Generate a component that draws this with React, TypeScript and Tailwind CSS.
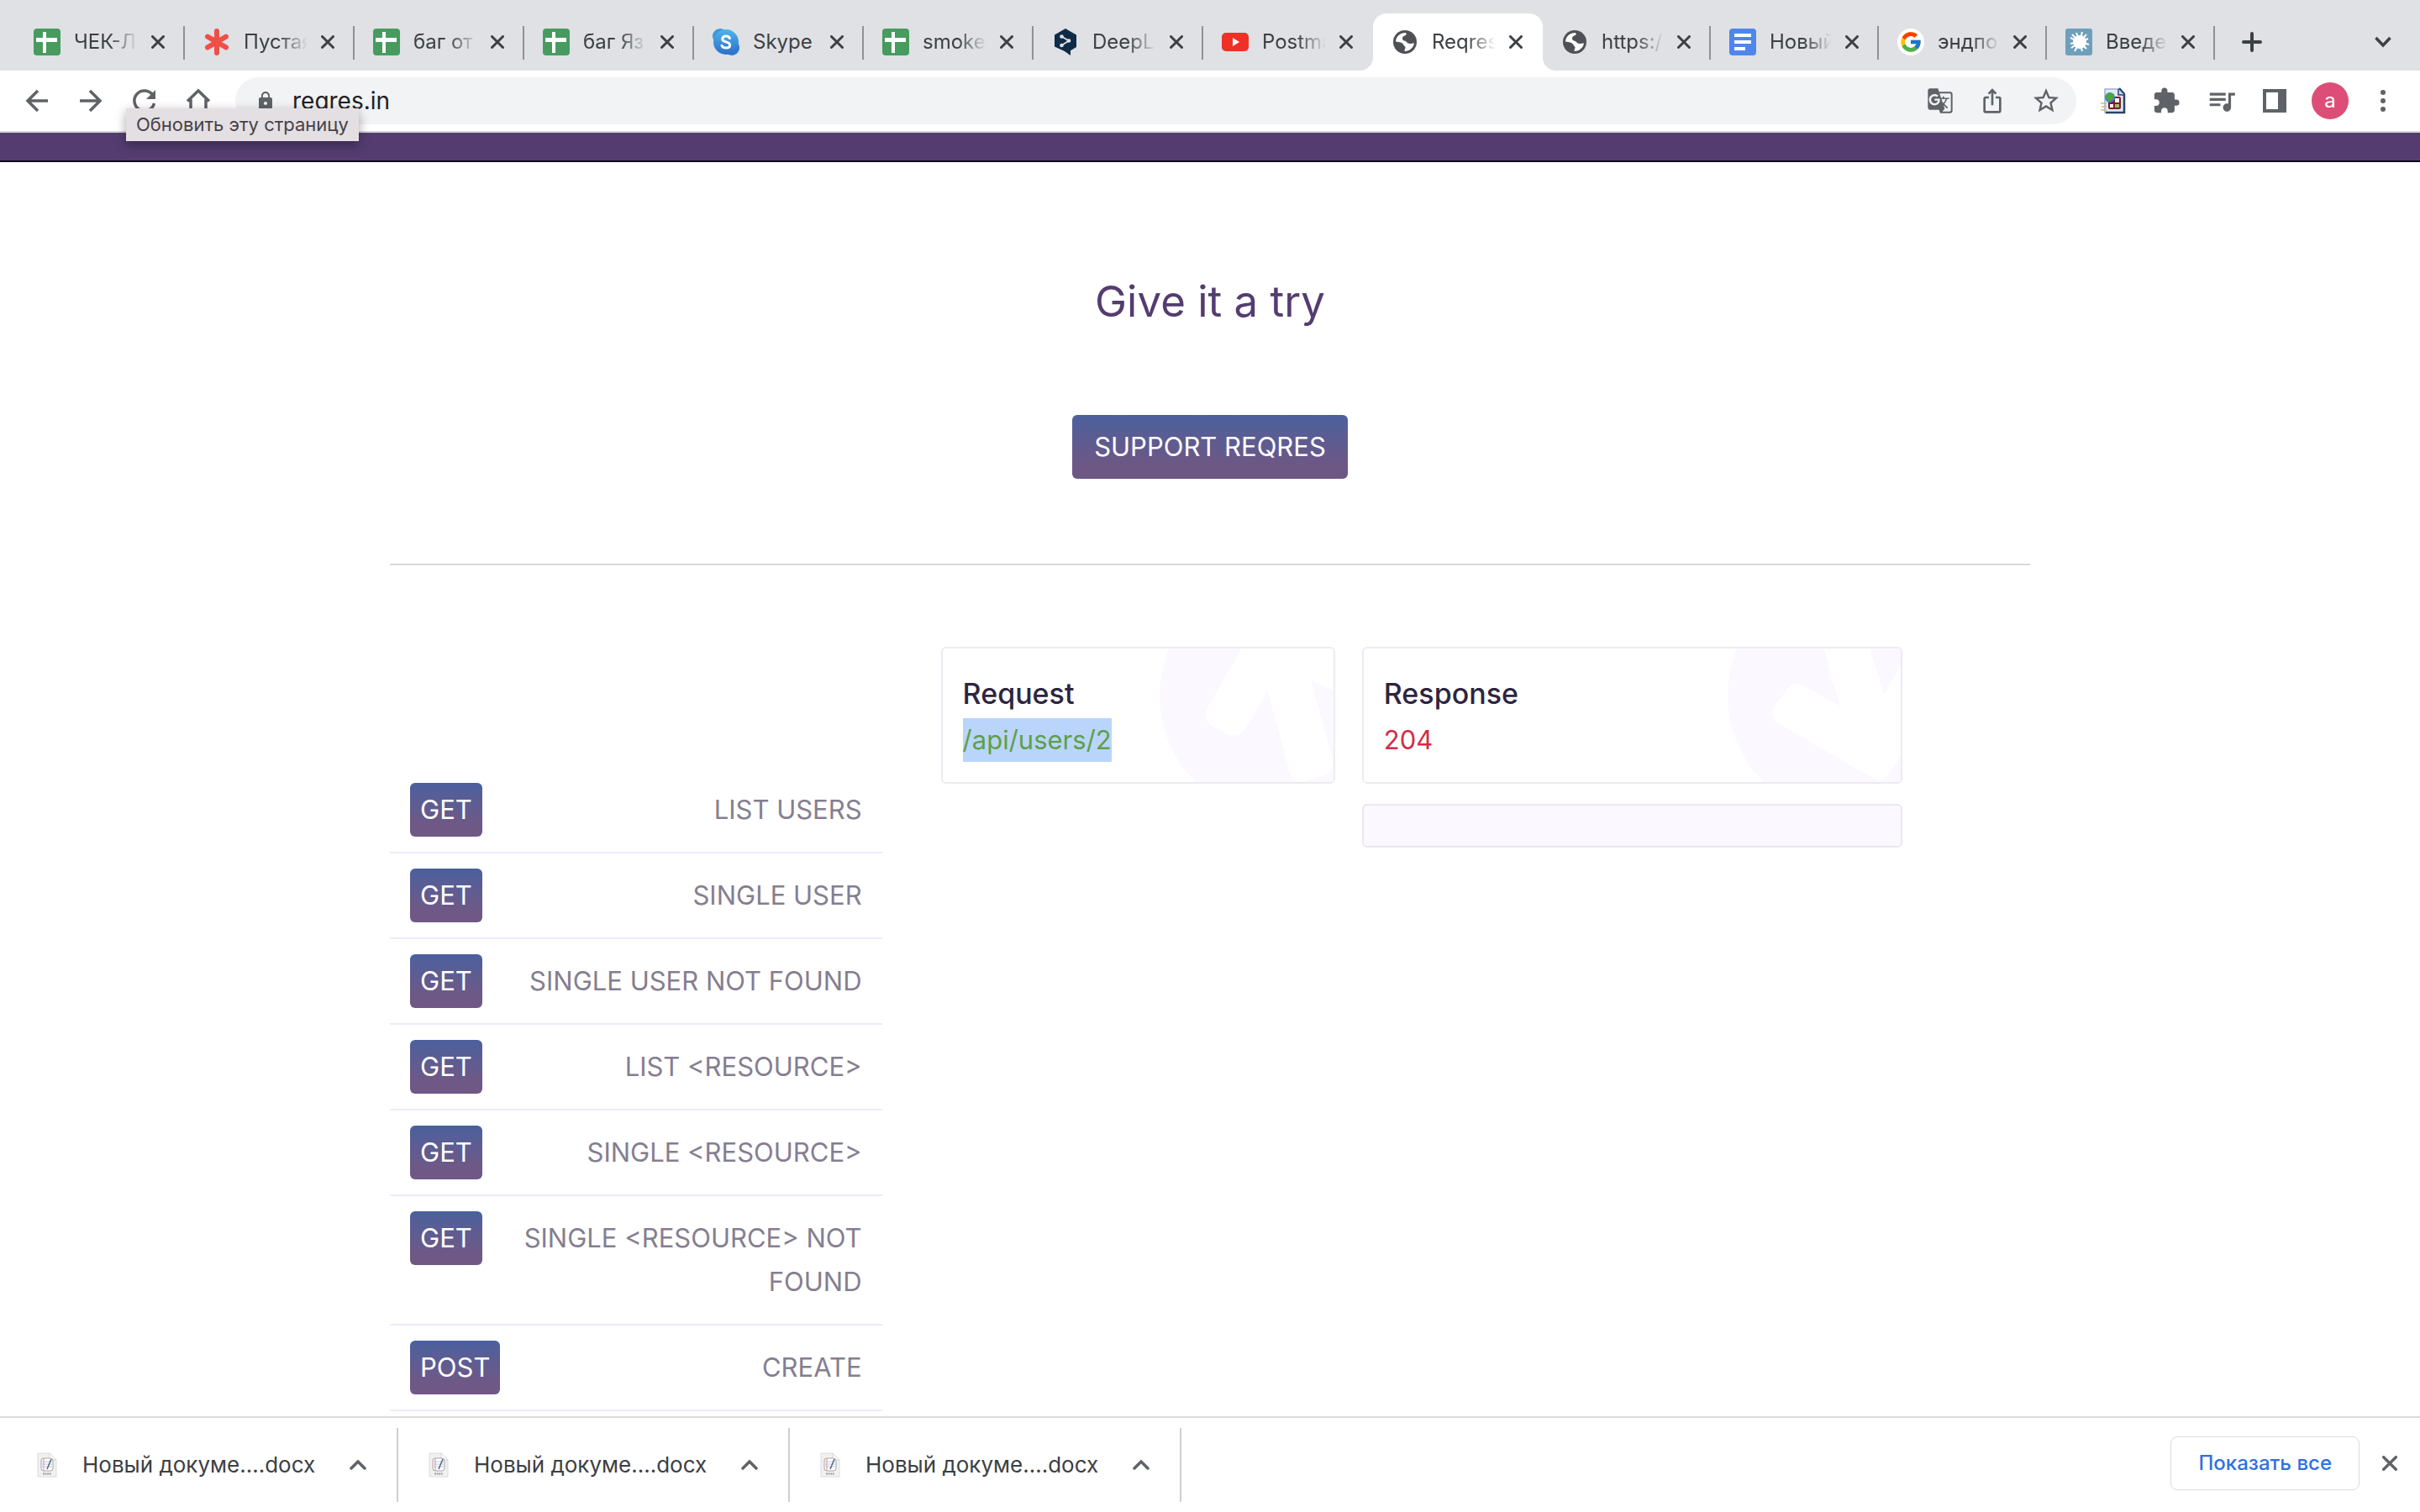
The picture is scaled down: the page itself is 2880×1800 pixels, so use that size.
import type { ReactNode } from "react";
import { FcGoogle } from "react-icons/fc";
import { MdExtension, MdGTranslate, MdIosShare, MdLock, MdQueueMusic, MdStarBorder } from "react-icons/md";

function SheetIcon() {
  return (
    <svg viewBox="0 0 32 32" className="size-8">
      <rect width="32" height="32" rx="4" fill="#479b5f" />
      <path d="M11 4h4v7h13v5H15v13h-4V16H3v-5h8z" fill="#fff" />
    </svg>
  );
}

function AsteriskIcon() {
  return (
    <svg viewBox="0 0 32 32" className="size-8" stroke="#f04f47" strokeWidth="6" strokeLinecap="round">
      <path d="M16 3v26M5 9.600l22 12.800M27 9.600L5 22.400" />
    </svg>
  );
}

function SkypeIcon() {
  return (
    <svg viewBox="0 0 32 32" className="size-8">
      <defs>
        <linearGradient id="skype" x1="0" y1="0" x2="0" y2="1">
          <stop offset="0" stopColor="#4db4ea" />
          <stop offset="1" stopColor="#2c6fc9" />
        </linearGradient>
      </defs>
      <circle cx="9" cy="9" r="9" fill="#3d97d8" />
      <circle cx="23" cy="23" r="9" fill="#2f78cf" />
      <circle cx="16" cy="16" r="15" fill="url(#skype)" />
      <path
        d="M20.500 11.500c-1-1.800-2.600-2.400-4.500-2.400-2.600 0-4.300 1.300-4.300 3.300 0 4.500 9 2.500 9 7.200 0 2.200-2 3.500-4.700 3.500-2.200 0-4-.8-5-2.700"
        fill="none"
        stroke="#fff"
        strokeWidth="3"
        strokeLinecap="round"
      />
    </svg>
  );
}

function DeeplIcon() {
  return (
    <svg viewBox="0 0 32 32" className="size-8">
      <path d="M16 0l13 7.500v14.500l-7 4.200V32l-7.500-5.200L3 21.500v-14z" fill="#0f2b46" />
      <path d="M11.500 9.500l8.500 5-8.500 5.500" fill="none" stroke="#dfe1e5" strokeWidth="1.800" />
      <circle cx="11.500" cy="9.500" r="2.300" fill="#dfe1e5" />
      <circle cx="20" cy="14.500" r="2.300" fill="#dfe1e5" />
      <circle cx="11.500" cy="20" r="2.300" fill="#dfe1e5" />
    </svg>
  );
}

function VideoIcon() {
  return (
    <svg viewBox="0 0 32 32" className="size-8">
      <rect y="5" width="32" height="22" rx="5" fill="#ee3124" />
      <path d="M13 11l8 5-8 5z" fill="#fff" />
    </svg>
  );
}

function GlobeIcon() {
  return (
    <svg viewBox="0 0 32 32" className="size-8">
      <circle cx="16" cy="16" r="14" fill="#505157" />
      <path
        d="M5 15.500C5.500 9.500 10 5 17 5l.8 1.800C16.500 9 13 8.500 13 12c0 3 4 2 5 4s2.500 1.500 4 2 3-1 5-.2C26 22.500 22 27 15.500 27l.3-2.500c2.200-2.500-.8-3.500-1.600-5.500-1-2.500-5-3-9.200-3.500z"
        fill="#fff"
      />
    </svg>
  );
}

function DocsIcon() {
  return (
    <svg viewBox="0 0 32 32" className="size-8">
      <rect width="32" height="32" rx="4" fill="#4f86ec" />
      <path d="M6 6h20v4H6zM6 14h20v4H6zM6 22h13v4H6z" fill="#fff" />
    </svg>
  );
}

function GoogleIcon() {
  return (
    <span className="flex size-8 items-center justify-center rounded-full bg-white">
      <FcGoogle size={28} />
    </span>
  );
}

function SplatIcon() {
  return (
    <svg viewBox="0 0 32 32" className="size-8">
      <rect width="32" height="32" rx="3" fill="#6f9fba" />
      <circle cx="17" cy="16" r="8" fill="#fff" />
      <path
        d="M17 16L13 5M17 16l3-12M17 16l8-9M17 16l10-4M17 16l11 3M17 16l8 8M17 16l3 11M17 16l-6 11M17 16L7 23M17 16L6 18M17 16L6 11M17 16L8 7"
        stroke="#fff"
        strokeWidth="2"
      />
    </svg>
  );
}

type Tab = { title: string; icon: ReactNode; active?: boolean; divider?: boolean; narrow?: boolean };

const tabs: Tab[] = [
  { title: "ЧЕК-Л", icon: <SheetIcon />, divider: true },
  { title: "Пустая", icon: <AsteriskIcon />, divider: true },
  { title: "баг от", icon: <SheetIcon />, divider: true },
  { title: "баг Яз", icon: <SheetIcon />, divider: true },
  { title: "Skype", icon: <SkypeIcon />, divider: true },
  { title: "smoke", icon: <SheetIcon />, divider: true },
  { title: "DeepL", icon: <DeeplIcon />, divider: true },
  { title: "Postma", icon: <VideoIcon /> },
  { title: "Reqres", icon: <GlobeIcon />, active: true },
  { title: "https:/", icon: <GlobeIcon />, divider: true, narrow: true },
  { title: "Новый", icon: <DocsIcon />, divider: true, narrow: true },
  { title: "эндпо", icon: <GoogleIcon />, divider: true, narrow: true },
  { title: "Введе", icon: <SplatIcon />, divider: true, narrow: true },
];

function Cross({ className }: { className: string }) {
  return (
    <svg viewBox="0 0 16 16" className={className} stroke="currentColor" strokeWidth="3" strokeLinecap="round">
      <path d="M1.500 1.500l13 13M14.500 1.500l-13 13" />
    </svg>
  );
}

function TabItem({ tab }: { tab: Tab }) {
  return (
    <div
      className={
        "relative flex h-[68px] shrink items-center pl-[22px] " +
        (tab.narrow ? "w-[200px] pr-6 " : "w-[202px] pr-6 ") +
        (tab.active ? "rounded-t-2xl bg-white" : "")
      }
    >
      {tab.active && (
        <>
          <span className="absolute bottom-0 -left-4 size-4 bg-[radial-gradient(circle_at_0_0,transparent_16px,#fff_16px)]" />
          <span className="absolute bottom-0 -right-4 size-4 bg-[radial-gradient(circle_at_100%_0,transparent_16px,#fff_16px)]" />
        </>
      )}
      {tab.icon}
      <button
        type="button"
        className={
          "ml-4 min-w-0 flex-1 overflow-hidden text-left text-2xl whitespace-nowrap text-[#3c4043] " +
          (tab.title === "Skype" ? "" : "[mask-image:linear-gradient(to_right,#000_55%,transparent)]")
        }
      >
        {tab.title}
      </button>
      <button type="button" aria-label={"Закрыть " + tab.title} className="ml-4 text-[#3c4043]">
        <Cross className="size-4" />
      </button>
      {tab.divider && <span className="absolute top-[15px] right-0 h-10 w-0.5 bg-[#8f9195]" />}
    </div>
  );
}

function TabStrip() {
  return (
    <header className="flex h-[84px] items-end bg-[#dfe1e5] pl-[18px]">
      {tabs.map((tab) => (
        <TabItem key={tab.title} tab={tab} />
      ))}
      <button type="button" aria-label="Новая вкладка" className="ml-8 flex h-[68px] items-center text-[#3c4043]">
        <svg viewBox="0 0 24 24" className="size-6" stroke="currentColor" strokeWidth="4" strokeLinecap="round">
          <path d="M12 2v20M2 12h20" />
        </svg>
      </button>
      <button type="button" aria-label="Поиск вкладок" className="mr-[34px] ml-auto flex h-[68px] items-center text-[#3c4043]">
        <svg viewBox="0 0 20 14" className="w-5" fill="none" stroke="currentColor" strokeWidth="3.500">
          <path d="M1.500 2l8.500 9 8.500-9" />
        </svg>
      </button>
    </header>
  );
}

function NavButton({ label, children }: { label: string; children: ReactNode }) {
  return (
    <button type="button" aria-label={label} className="flex size-8 items-center justify-center">
      <svg viewBox="0 0 32 32" className="size-8" fill="none" stroke="#5f6368" strokeWidth="3.500">
        {children}
      </svg>
    </button>
  );
}

function ExtensionDocIcon() {
  return (
    <svg viewBox="0 0 32 32" className="size-8">
      <path d="M6 2h17l6 6v22H6z" fill="#dfe8f8" stroke="#9fb0d0" strokeWidth="1.500" />
      <path d="M23 1l6 7v22H7" fill="none" stroke="#2b4468" strokeWidth="2.500" />
      <path d="M22 2v7h7" fill="#c8d6ee" stroke="#2b4468" strokeWidth="1.500" />
      <rect x="10" y="11" width="15" height="15" rx="2" fill="#7d1d22" />
      <path d="M18 13h5v5h-5zM12 20h4v4h-4z" fill="#fff" />
      <path d="M18 20h5v4h-5z" fill="#8fc46f" />
      <circle cx="12" cy="12" r="6" fill="#3f7fd8" />
      <path d="M7 10c2-5 9-4 10-1s-2 4-4 7-6-2-6-6z" fill="#49a83c" />
      <path d="M1 19h7M2 23h6M1 27h7" stroke="#c9bd80" strokeWidth="1.500" />
    </svg>
  );
}

function Toolbar() {
  return (
    <div className="relative z-10 flex h-[74px] items-center border-b-2 border-[#d7d6dc] bg-white pl-7 text-[#5f6368]">
      <div className="flex gap-8">
        <NavButton label="Назад">
          <path d="M29 16H5M17 4L5 16l12 12" />
        </NavButton>
        <NavButton label="Вперёд">
          <path d="M3 16h24M15 4l12 12-12 12" />
        </NavButton>
        <NavButton label="Обновить эту страницу">
          <path d="M26 9.500A12 12 0 1 0 27.500 19" />
          <path d="M29 3v11H18z" fill="#5f6368" stroke="none" />
        </NavButton>
        <NavButton label="Главная">
          <path d="M3 16.500L16 4l13 12.500M7 14v14h18V14" />
        </NavButton>
      </div>
      <div className="ml-7 flex h-14 flex-1 items-center rounded-full bg-[#f1f3f4] pr-[18px] pl-6">
        <MdLock size={24} />
        <input
          type="text"
          aria-label="Адресная строка"
          defaultValue="reqres.in"
          className="ml-5 min-w-0 flex-1 bg-transparent text-[28px] leading-9 text-[#202124] outline-none"
        />
        <div className="flex items-center gap-[30px]">
          <button type="button" aria-label="Перевести">
            <MdGTranslate size={32} />
          </button>
          <button type="button" aria-label="Поделиться">
            <MdIosShare size={32} />
          </button>
          <button type="button" aria-label="Добавить в закладки">
            <MdStarBorder size={36} />
          </button>
        </div>
      </div>
      <div className="ml-7 flex items-center gap-[30px]">
        <button type="button" aria-label="Расширение">
          <ExtensionDocIcon />
        </button>
        <button type="button" aria-label="Расширения">
          <MdExtension size={34} />
        </button>
        <button type="button" aria-label="Медиа">
          <MdQueueMusic size={38} />
        </button>
        <button type="button" aria-label="Боковая панель">
          <svg viewBox="0 0 28 28" className="size-7">
            <path d="M2 2h24v24H2z" fill="none" stroke="currentColor" strokeWidth="4" />
            <path d="M18 0h10v28H18z" fill="currentColor" />
          </svg>
        </button>
        <button
          type="button"
          className="flex size-11 items-center justify-center rounded-full bg-[#dc4e77] text-2xl text-white"
        >
          a
        </button>
      </div>
      <button type="button" aria-label="Меню" className="mr-[41px] ml-[38px]">
        <svg viewBox="0 0 6 26" className="h-[26px]" fill="currentColor">
          <circle cx="3" cy="3" r="3" />
          <circle cx="3" cy="13" r="3" />
          <circle cx="3" cy="23" r="3" />
        </svg>
      </button>
      <div
        role="tooltip"
        className="absolute top-[45px] left-[150px] bg-[#e4dfe3] px-3 pt-[3px] pb-1 text-[22px] leading-8 whitespace-nowrap text-[#454247] shadow-[0_4px_12px_rgba(0,0,0,0.35)]"
      >
        Обновить эту страницу
      </div>
    </div>
  );
}

const endpoints = [
  { method: "GET", label: "LIST USERS" },
  { method: "GET", label: "SINGLE USER" },
  { method: "GET", label: "SINGLE USER NOT FOUND" },
  { method: "GET", label: "LIST <RESOURCE>" },
  { method: "GET", label: "SINGLE <RESOURCE>" },
  { method: "GET", label: "SINGLE <RESOURCE> NOT FOUND" },
  { method: "POST", label: "CREATE" },
];

function EndpointList() {
  return (
    <ul className="w-[30%] pt-36 text-[31px] leading-[52px]">
      {endpoints.map((e) => (
        <li key={e.label} className="border-b-2 border-[#efe8fd]">
          <a href={"#" + e.label} className="flex items-start justify-between px-6 py-[18px]">
            <span className="rounded-md bg-linear-to-b from-[#4a609e] to-[#6f5885] to-80% px-3 py-1.5 text-white">{e.method}</span>
            <span className="py-1.5 pl-10 text-right text-[#857e90]">{e.label}</span>
          </a>
        </li>
      ))}
    </ul>
  );
}

function Card({ title, children, art }: { title: string; children: ReactNode; art: ReactNode }) {
  return (
    <div className="relative h-[163px] overflow-hidden rounded-md border-2 border-[#edebf2] px-6 pt-7">
      <svg viewBox="0 0 208 158" className="absolute top-0 right-0 h-full">
        {art}
      </svg>
      <div className="relative">
        <h3 className="text-[34px] leading-[52px] font-medium text-[#2d2540]">{title}</h3>
        <p className="mt-[3px] text-[31px] leading-[52px]">{children}</p>
      </div>
    </div>
  );
}

function Console() {
  return (
    <div className="grid flex-1 grid-cols-[41%_1fr] content-start gap-x-8 gap-y-6 pr-[152px] pl-[70px]">
      <Card
        title="Request"
        art={
          <>
            <circle cx="147" cy="56" r="144" fill="#fbf8ff" />
            <path
              d="M100 0L61 68Q52 84 66 92L80 100Q96 108 105 94L131 50 157 146Q161 160 176 156L195 151Q210 147 208 134L182 37 208 50V0z"
              fill="#fff"
            />
          </>
        }
      >
        <span className="inline-block bg-[#b9d5fb] text-[#5f9f4a]">/api/users/2</span>
      </Card>
      <Card
        title="Response"
        art={
          <>
            <circle cx="147" cy="56" r="144" fill="#fbf8ff" />
            <path
              d="M117 0L136 68 91 43Q81 38 75 47L58 68Q52 80 62 88L174 153Q184 159 192 150L208 127V20L188 55 171 0z"
              fill="#fff"
            />
          </>
        }
      >
        <span className="text-[#d22d49]">204</span>
      </Card>
      <div className="col-start-2 h-[52px] rounded-md border-2 border-[#eae7f1] bg-[#fbf8ff]" />
    </div>
  );
}

function DocxIcon() {
  return (
    <svg viewBox="0 0 24 30" className="h-[30px] w-6">
      <path d="M1 1h14l8 8v20H1z" fill="#f1f1f1" stroke="#dcdcdc" />
      <path d="M15 1v8h8z" fill="#fff" stroke="#cfcfcf" strokeWidth=".8" />
      <rect x="5" y="7" width="14" height="15" rx="3" fill="#fff" stroke="#a5a5a5" />
      <path d="M6 11h12M6 14h12M6 17h12" stroke="#b9c9e6" />
      <path d="M8 7v15" stroke="#e58f8f" />
      <path d="M17 8l-5 12" stroke="#56627a" strokeWidth="1.500" />
      <path d="M7 25.500h10" stroke="#a0a0a0" strokeWidth="2" strokeDasharray="2 .6" />
    </svg>
  );
}

function DownloadShelf() {
  return (
    <footer className="relative flex h-[114px] shrink-0 items-center border-t-2 border-[#dadada] bg-white pl-2">
      {[1, 2, 3].map((n) => (
        <div key={n} className="flex h-[88px] w-[466px] items-center border-r-2 border-[#cfcfcf] pl-9">
          <DocxIcon />
          <button type="button" className="ml-[30px] text-[26px] leading-8 whitespace-nowrap text-[#3c4043]">
            Новый докуме….docx
          </button>
          <button type="button" aria-label="Действия с файлом" className="mr-9 ml-auto text-[#5f6368]">
            <svg viewBox="0 0 20 12" className="w-5" fill="none" stroke="currentColor" strokeWidth="3.500" strokeLinecap="round">
              <path d="M2 10l8-8 8 8" />
            </svg>
          </button>
        </div>
      ))}
      <button
        type="button"
        className="mb-1 ml-auto h-16 rounded-lg border border-[#dadce0] px-8 text-2xl font-medium text-[#2f71e0]"
      >
        Показать все
      </button>
      <button type="button" aria-label="Закрыть панель" className="mr-[27px] mb-1 ml-[27px] text-[#5f6368]">
        <Cross className="size-[18px]" />
      </button>
    </footer>
  );
}

export default function App() {
  return (
    <div className="flex h-screen flex-col overflow-hidden bg-white font-['Inter','Noto_Sans',sans-serif]">
      <TabStrip />
      <Toolbar />
      <main className="min-h-0 flex-1 overflow-hidden">
        <div className="h-[35px] border-b-2 border-[#0c0518] bg-[#543c70]" />
        <div className="mx-auto max-w-[1952px]">
          <section className="flex flex-col items-center border-b-2 border-[#dad6e2] pt-[130px] pb-[101px]">
            <h2 className="text-[51px] leading-[72px] text-[#543c70]">Give it a try</h2>
            <button
              type="button"
              className="mt-[99px] h-[76px] rounded-md bg-linear-to-b from-[#4a609e] to-[#6d5784] to-80% px-[26px] text-[31px] text-white"
            >
              SUPPORT REQRES
            </button>
          </section>
          <section className="flex pt-[97px]">
            <EndpointList />
            <Console />
          </section>
        </div>
      </main>
      <DownloadShelf />
    </div>
  );
}
